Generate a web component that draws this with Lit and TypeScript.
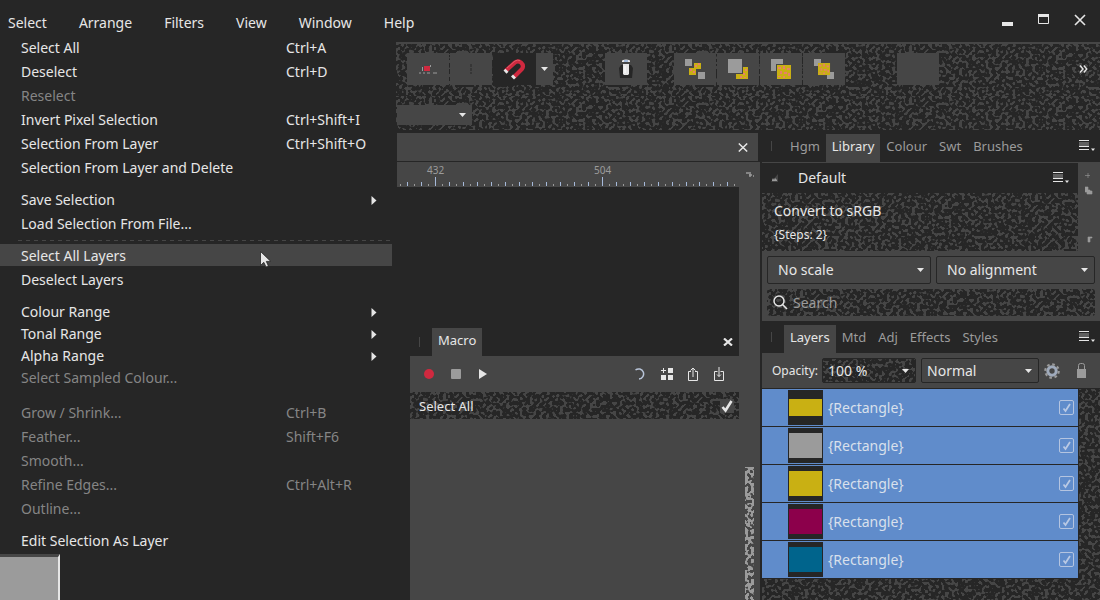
import { LitElement, html, css, svg, unsafeCSS, nothing } from "lit";
import { customElement } from "lit/decorators.js";
import { classMap } from "lit/directives/class-map.js";

// Two-tone speckle tile, used for the textured toolbar and list surfaces.
const speckle = (color: string, threshold: string, freq: string) =>
  unsafeCSS(
    `url("data:image/svg+xml,${encodeURIComponent(
      `<svg xmlns="http://www.w3.org/2000/svg" width="240" height="240"><filter id="n" x="0" y="0" width="100%" height="100%" color-interpolation-filters="sRGB"><feTurbulence type="fractalNoise" baseFrequency="${freq}" numOctaves="1" seed="7" stitchTiles="stitch"/><feColorMatrix values="0 0 0 0 0 0 0 0 0 0 0 0 0 0 0 24 0 0 0 ${threshold}" result="m"/><feFlood flood-color="${color}"/><feComposite operator="in" in2="m"/></filter><rect width="240" height="240" filter="url(#n)"/></svg>`
    )}")`
  );

const vector = (w: number, h: number, body: string) =>
  unsafeCSS(
    `url("data:image/svg+xml,${encodeURIComponent(
      `<svg xmlns="http://www.w3.org/2000/svg" width="${w}" height="${h}" viewBox="0 0 ${w} ${h}">${body}</svg>`
    )}")`
  );

const theme = css`
  :host {
    --dark: #262626;
    --panel: #464646;
    --dim: #9b9b9b;
    --text: #e6e6e6;
    --speckle: ${speckle("#464646", "-12.7", "0.3")};
    --speckle-dim: ${speckle("#9b9b9b", "-11", "0.3")};
    --arrow: ${vector(7, 4, '<path d="M0 0h7L3.500 4z" fill="#e6e6e6"/>')};
    font-family: "Noto Sans", "Open Sans", sans-serif;
    font-size: 14px;
    line-height: 20px;
    color: var(--text);
  }
  * {
    box-sizing: border-box;
  }
  button,
  input,
  select {
    font: inherit;
    color: inherit;
    margin: 0;
    padding: 0;
    border: 0;
    border-radius: 0;
    background: none;
    appearance: none;
  }
  svg {
    display: block;
  }
  .speckled {
    background-color: var(--dark);
    background-image: var(--speckle);
  }
  .tabs {
    display: flex;
    align-items: flex-end;
    background: var(--dark);
    color: var(--dim);
    font-size: 13px;
  }
  .tabs .grip {
    width: 1px;
    height: 10px;
    background: var(--panel);
    align-self: center;
  }
  .tab {
    height: 28px;
    padding: 0 6px 4px;
  }
  .tab.on {
    background: var(--panel);
    color: var(--text);
  }
  .push {
    margin-left: auto;
  }
`;

const panelMenuIcon = svg`<svg width="16" height="12" viewBox="0 0 16 12"><path d="M0 .5h10M0 6.500h10M0 9.500h10" stroke="#e6e6e6"/><path d="M0 3h10M0 5h10" stroke="#9b9b9b"/><path d="M12 8.500h4L14 11z" fill="#e6e6e6"/></svg>`;

type Item = { label: string; key?: string; off?: boolean; sub?: boolean; on?: boolean };

const groups: Item[][] = [
  [
    { label: "Select All", key: "Ctrl+A" },
    { label: "Deselect", key: "Ctrl+D" },
    { label: "Reselect", off: true },
    { label: "Invert Pixel Selection", key: "Ctrl+Shift+I" },
    { label: "Selection From Layer", key: "Ctrl+Shift+O" },
    { label: "Selection From Layer and Delete" },
  ],
  [{ label: "Save Selection", sub: true }, { label: "Load Selection From File..." }],
  [{ label: "Select All Layers", on: true }, { label: "Deselect Layers" }],
  [
    { label: "Colour Range", sub: true },
    { label: "Tonal Range", sub: true },
    { label: "Alpha Range", sub: true },
    { label: "Select Sampled Colour...", off: true },
  ],
  [
    { label: "Grow / Shrink...", key: "Ctrl+B", off: true },
    { label: "Feather...", key: "Shift+F6", off: true },
    { label: "Smooth...", off: true },
    { label: "Refine Edges...", key: "Ctrl+Alt+R", off: true },
    { label: "Outline...", off: true },
  ],
  [{ label: "Edit Selection As Layer" }],
];

@customElement("select-menu")
class SelectMenu extends LitElement {
  static styles = [
    theme,
    css`
      :host {
        display: flex;
        flex-direction: column;
        background: var(--dark);
      }
      .groups {
        display: flex;
        flex-direction: column;
        gap: 10px;
      }
      .group {
        display: flex;
        flex-direction: column;
        gap: 2px;
        position: relative;
      }
      .group.tight {
        gap: 0;
        padding-bottom: 3px;
      }
      .group.ruled::before {
        content: "";
        position: absolute;
        left: 18px;
        right: 4px;
        top: -4px;
        height: 1px;
        background: repeating-linear-gradient(90deg, var(--panel) 0 4px, transparent 4px 8px);
      }
      .item {
        display: grid;
        grid-template-columns: 265px 1fr auto;
        align-items: center;
        height: 22px;
        margin-right: 4px;
        padding: 2px 15px 0 21px;
        text-align: left;
      }
      .item.on {
        background: var(--panel);
      }
      .item:disabled {
        color: #858585;
      }
      .sub {
        grid-column: 3;
      }
      .cursor {
        position: absolute;
        left: 260px;
        top: 7px;
      }
      .page {
        width: 60px;
        flex: 1;
        min-height: 44px;
        margin-top: 3px;
        background: var(--dim);
        border-top: 3px solid var(--panel);
        border-right: 2px solid var(--text);
      }
    `,
  ];
  render() {
    return html`
      <div class="groups">
        ${groups.map(
          (g, i) => html`<div class=${classMap({ group: true, ruled: i === 2, tight: i === 3 })}>
            ${g.map(
              (m) => html`<button class=${classMap({ item: true, on: !!m.on })} ?disabled=${!!m.off}>
                <span>${m.label}</span>
                ${m.key ? html`<span>${m.key}</span>` : nothing}
                ${m.sub
                  ? html`<svg class="sub" width="6" height="9" viewBox="0 0 6 9"><path d="M.5 0L5.500 4.500L.5 9z" fill="#e6e6e6" /></svg>`
                  : nothing}
              </button>`
            )}
            ${i === 2
              ? html`<svg class="cursor" width="12" height="17" viewBox="0 0 12 17">
                  <path d="M.5.5v14l3.300-3.200 2.200 4.700 2.400-1.100-2.100-4.500h4.500z" fill="#e6e6e6" stroke="#262626" stroke-width=".8" />
                </svg>`
              : nothing}
          </div>`
        )}
      </div>
      <div class="page"></div>
    `;
  }
}

const pinkDots = svg`<path d="M1 2h3v2H1zM6 1h2v3H6zM10 3h3v2h-3zM3 6h2v3H3zM7 7h3v2H7zM11 8h2v3h-2zM1 11h3v1H1zM6 11h2v2H6z" fill="#e88068"/>`;

@customElement("tool-bars")
class ToolBars extends LitElement {
  static styles = [
    theme,
    css`
      :host {
        display: block;
        margin-top: 6px;
        border-top: 2px solid var(--panel);
      }
      .tools {
        display: flex;
        height: 52px;
        padding: 9px 12px 11px 11px;
        gap: 1px;
      }
      .tool {
        width: 42px;
        height: 32px;
        display: grid;
        place-items: center;
        background: var(--panel);
      }
      .tool.on {
        width: 43px;
        background: var(--dark);
      }
      .tool.more {
        width: 17px;
      }
      .snap {
        display: flex;
      }
      .trash {
        margin-left: 51px;
      }
      .order {
        display: flex;
        gap: 1px;
        margin-left: 26px;
      }
      .blank {
        margin-left: 51px;
      }
      .overflow {
        margin-left: auto;
        align-self: center;
      }
      .context {
        height: 34px;
        padding: 9px 1px 5px;
        display: flex;
      }
      .pick {
        width: 75px;
        height: 20px;
        background: var(--panel) var(--arrow) no-repeat right 6px center;
      }
    `,
  ];
  render() {
    return html`
      <div class="tools speckled">
        <button class="tool" aria-label="Snapping options">
          <svg width="18" height="14" viewBox="0 0 18 14">
            <path d="M0 11h2M4 11h2M8 11h3M14 11h4" stroke="#9b9b9b" />
            <path d="M3.500 5v4M11.500 3v2" stroke="#9b9b9b" />
            <path d="M5 4h6v5H5z" fill="#d0293f" />
          </svg>
        </button>
        <button class="tool" aria-label="Guides">
          <svg width="2" height="10" viewBox="0 0 2 10"><path d="M1 0v10" stroke="#262626" stroke-dasharray="3 1" /></svg>
        </button>
        <div class="snap">
          <button class="tool on" aria-label="Snapping">
            <svg width="24" height="22" viewBox="0 0 24 22">
              <path d="M2.500 13L12 4.400A4.900 4.900 0 0 1 19 11L11 19" fill="none" stroke="#d0293f" stroke-width="4.200" />
              <path d="M4 10L12 3A6 6 0 0 1 17 2.500" fill="none" stroke="#e05a68" stroke-width="1" />
              <path d="M.5 12.500l2-1.800 3 3-2 2zM8 18.500l2-2 3 3-2 2z" fill="#e6e6e6" />
            </svg>
          </button>
          <button class="tool more" aria-label="More snapping">
            <svg width="7" height="4" viewBox="0 0 7 4"><path d="M0 0h7L3.500 4z" fill="#e6e6e6" /></svg>
          </button>
        </div>
        <button class="tool trash" aria-label="Assistant">
          <svg width="14" height="20" viewBox="0 0 14 20">
            <path d="M2 6l-2 3 1 10h12l1-10-2-3z" fill="#262626" />
            <path d="M4 5h6v10l-1 1H5l-1-1z" fill="#e6e6e6" />
            <path d="M3 1.500q4-2 8 0v1.500H3z" fill="#e6e6e6" />
            <path d="M5 2h4" stroke="#608ccb" />
            <path d="M6 7v7" stroke="#fff" />
          </svg>
        </button>
        <div class="order">
          <button class="tool" aria-label="Move to back">
            <svg width="20" height="20" viewBox="0 0 20 20">
              <path d="M9 4h7v6h-5v6H4V9h5z" fill="#c9b013" />
              <path d="M10 6h2v2h-2zM13 4h2v2h-2zM5 10h2v2H5zM8 12h2v2H8z" fill="#e88068" />
              <path d="M0 0h7v7H0zM13 13h7v7h-7z" fill="#9b9b9b" />
            </svg>
          </button>
          <button class="tool" aria-label="Back one">
            <svg width="20" height="20" viewBox="0 0 20 20">
              <path d="M15 8h5v12H8v-5h7z" fill="#c9b013" />
              <path d="M17 10h2v2h-2zM15 14h2v2h-2zM12 17h2v2h-2zM16 18h2v1h-2z" fill="#e88068" />
              <path d="M0 0h14v14H0z" fill="#9b9b9b" />
            </svg>
          </button>
          <button class="tool" aria-label="Forward one">
            <svg width="20" height="20" viewBox="0 0 20 20">
              <path d="M0 0h12v5H5v7H0z" fill="#9b9b9b" />
              <g transform="translate(6 6)"><path d="M0 0h14v14H0z" fill="#c9b013" />${pinkDots}</g>
            </svg>
          </button>
          <button class="tool" aria-label="Move to front">
            <svg width="20" height="20" viewBox="0 0 20 20">
              <path d="M0 0h7v7H0zM13 13h7v7h-7z" fill="#9b9b9b" />
              <g transform="translate(4 4) scale(.86)"><path d="M0 0h14v14H0z" fill="#c9b013" />${pinkDots}</g>
            </svg>
          </button>
        </div>
        <button class="tool blank" aria-label="Insert target"></button>
        <button class="overflow" aria-label="More tools">
          <svg width="9" height="8" viewBox="0 0 9 8"><path d="M1 .5L4 4L1 7.500M4.800.5L7.800 4L4.800 7.500" fill="none" stroke="#e6e6e6" stroke-width="1.400" /></svg>
        </button>
      </div>
      <div class="context speckled">
        <select class="pick" aria-label="Preset"><option></option></select>
      </div>
    `;
  }
}

@customElement("macro-panel")
class MacroPanel extends LitElement {
  static styles = [
    theme,
    css`
      :host {
        display: flex;
        flex-direction: column;
        background: var(--panel);
      }
      .tabs {
        height: 28px;
        padding: 0 6px 0 9px;
        gap: 12px;
      }
      .close {
        align-self: center;
      }
      .bar {
        display: flex;
        align-items: center;
        height: 36px;
        padding: 0 14px;
        gap: 17px;
      }
      .bar .push {
        display: flex;
        align-items: center;
        gap: 15px;
      }
      .step {
        display: flex;
        align-items: center;
        justify-content: space-between;
        height: 27px;
        padding: 0 5px 0 9px;
        font-size: 13px;
      }
      .check {
        width: 14px;
        height: 14px;
        background: var(--panel)
          ${vector(14, 14, '<path d="M2.500 8L5.500 11.500L11.500 2" fill="none" stroke="#e6e6e6" stroke-width="2.600"/>')} no-repeat center;
      }
    `,
  ];
  render() {
    return html`
      <div class="tabs">
        <span class="grip"></span>
        <button class="tab on">Macro</button>
        <button class="close push" aria-label="Close">
          <svg width="10" height="8" viewBox="0 0 10 8"><path d="M1 .5L9 7.500M9 .5L1 7.500" stroke="#e6e6e6" stroke-width="2.200" /></svg>
        </button>
      </div>
      <div class="bar">
        <button aria-label="Record"><svg width="10" height="10"><circle cx="5" cy="5" r="5" fill="#d0293f" /></svg></button>
        <button aria-label="Stop"><svg width="10" height="10"><rect width="10" height="10" rx="1" fill="#9b9b9b" /></svg></button>
        <button aria-label="Play"><svg width="10" height="10"><path d="M1 0L9 5L1 10z" fill="#e6e6e6" /></svg></button>
        <div class="push">
          <button aria-label="Reset">
            <svg width="12" height="12" viewBox="0 0 12 12"><path d="M1.500 2A5 5 0 1 1 5 10.900" fill="none" stroke="#b8c4d8" stroke-width="1.500" /></svg>
          </button>
          <button aria-label="Add to library">
            <svg width="12" height="12" viewBox="0 0 12 12"><path d="M7 0h5v5H7zM0 7h5v5H0zM7 7h5v5H7z" fill="#e6e6e6" /><path d="M0 2.500h5M2.500 0v5" stroke="#e6e6e6" /></svg>
          </button>
          <button aria-label="Export">
            <svg width="11" height="14" viewBox="0 0 11 14"><path d="M3 4.500H.5v9h9v-9H7M5 1v9M2.500 3.500L5 1L7.500 3.500" fill="none" stroke="#e6e6e6" /></svg>
          </button>
          <button aria-label="Import">
            <svg width="11" height="14" viewBox="0 0 11 14"><path d="M3.500 4.500H.5v9h9v-9H6.500M5 0v9.500M3 7.500L5 9.500L7 7.500" fill="none" stroke="#e6e6e6" /></svg>
          </button>
        </div>
      </div>
      <label class="step speckled"><span>Select All</span><input class="check" type="checkbox" checked /></label>
    `;
  }
}

@customElement("document-view")
class DocumentView extends LitElement {
  static styles = [
    theme,
    css`
      :host {
        display: flex;
        flex-direction: column;
      }
      .title {
        display: flex;
        align-items: center;
        justify-content: flex-end;
        height: 28px;
        margin: 3px 2px 1px 1px;
        padding-right: 10px;
        background: var(--panel);
      }
      .view {
        flex: 1;
        display: grid;
        grid-template-columns: 1fr 21px;
        margin-left: 1px;
      }
      .column {
        display: flex;
        flex-direction: column;
      }
      .ruler {
        height: 25px;
        width: 100%;
        background: var(--panel);
      }
      .ruler text {
        font: 10px "Noto Sans", sans-serif;
        fill: var(--dim);
      }
      .canvas {
        flex: 1;
        padding: 141px 0 0 13px;
        background: var(--dark);
        display: flex;
      }
      macro-panel {
        flex: 1;
      }
      .scroll {
        background: var(--panel);
        display: flex;
        flex-direction: column;
        justify-content: space-between;
        padding-top: 10px;
      }
      .scroll svg {
        align-self: center;
      }
      .thumb {
        width: 9px;
        height: 133px;
        margin-left: 6px;
        background: var(--panel) var(--speckle-dim);
      }
    `,
  ];
  render() {
    const ticks = [];
    for (let i = -5; i < 44; i++) {
      const x = 38.5 + Math.round(i * 6.96);
      const top = i % 24 === 0 ? 15 : i % 2 === 0 ? 20 : 22;
      ticks.push(svg`<path d=${`M${x} ${top}V24`} stroke=${i % 2 ? "#9b9b9b" : "#a5b9da"} />`);
    }
    return html`
      <div class="title">
        <button aria-label="Close document">
          <svg width="10" height="9" viewBox="0 0 10 9"><path d="M.8.5L9.200 8.500M9.200.5L.8 8.500" stroke="#e6e6e6" stroke-width="1.500" /></svg>
        </button>
      </div>
      <div class="view">
        <div class="column">
          <svg class="ruler">
            ${ticks}
            <text x="30" y="12">432</text>
            <text x="197" y="12">504</text>
          </svg>
          <div class="canvas"><macro-panel></macro-panel></div>
        </div>
        <div class="scroll">
          <svg width="8" height="5" viewBox="0 0 8 5"><path d="M0 1h3M4 0v5M3 3h3M7 4h1" stroke="#9b9b9b" stroke-width="1.500" /></svg>
          <div class="thumb"></div>
        </div>
      </div>
    `;
  }
}

const layers = [
  { color: "#c9b013", wide: true },
  { color: "#9b9b9b" },
  { color: "#c9b013" },
  { color: "#8c004b" },
  { color: "#00648c" },
];

@customElement("side-panels")
class SidePanels extends LitElement {
  static styles = [
    theme,
    css`
      :host {
        display: flex;
        flex-direction: column;
        background: var(--panel);
        border-left: 2px solid var(--dark);
      }
      .tabs {
        height: 32px;
        padding: 0 5px 0 9px;
        gap: 0;
      }
      .tabs .grip {
        margin-right: 12px;
      }
      .tabs .push {
        align-self: center;
      }
      .library {
        display: grid;
        grid-template-columns: 1fr 22px;
        margin-top: 1px;
      }
      .head {
        display: flex;
        align-items: center;
        height: 30px;
        padding: 0 9px;
        background: var(--dark);
      }
      .head .name {
        margin-left: 20px;
      }
      .entry {
        height: 58px;
        padding: 8px 12px;
        display: flex;
        flex-direction: column;
        gap: 4px;
      }
      .entry small {
        font-size: 12px;
      }
      .marks {
        justify-self: center;
        margin-top: 10px;
      }
      .filters {
        display: grid;
        grid-template-columns: 164fr 159fr;
        gap: 5px;
        padding: 5px;
      }
      .drop {
        width: 100%;
        height: 28px;
        padding: 0 20px 0 10px;
        border: 1px solid var(--dark);
        border-radius: 2px;
        background: var(--arrow) no-repeat right 6px center;
      }
      .search {
        grid-column: 1 / -1;
        display: flex;
        align-items: center;
        gap: 5px;
        height: 27px;
        padding-left: 6px;
        border-radius: 3px;
      }
      .search input {
        flex: 1;
        min-width: 0;
      }
      .search input::placeholder {
        color: var(--dim);
        opacity: 1;
      }
      .blend {
        display: flex;
        align-items: center;
        height: 35px;
        padding: 0 14px 0 10px;
        font-size: 12px;
      }
      .blend .drop {
        height: 25px;
        padding-left: 5px;
        width: 118px;
        font-size: 14px;
      }
      .blend .opacity {
        width: 94px;
        margin: 0 5px 0 4px;
        background-color: var(--dark);
        background-image: var(--arrow), var(--speckle);
        background-repeat: no-repeat, repeat;
      }
      .blend .gear {
        margin: 0 auto 0 5px;
      }
      .stack {
        flex: 1;
        padding: 0 22px 0 0;
        border-top: 1px solid var(--dark);
      }
      .row {
        display: flex;
        align-items: center;
        height: 37px;
        margin-bottom: 1px;
        padding: 0 4px 0 26px;
        background: #608ccb;
        outline: 1px solid var(--dark);
      }
      .row span {
        margin-left: 5px;
        color: #d9e0ec;
      }
      .thumb {
        width: 35px;
        height: 35px;
        background: var(--dark);
        display: grid;
        place-items: center;
      }
      .thumb div {
        width: 33px;
        height: 25px;
      }
      .thumb div.wide {
        height: 17px;
      }
      .tick {
        width: 15px;
        height: 15px;
        margin-left: auto;
        border: 1px solid #b4c4e0;
        border-radius: 2px;
        background: ${vector(13, 13, '<path d="M3.500 7.500L5.500 10L10 3" fill="none" stroke="#b9c9e4" stroke-width="1.800"/>')} no-repeat center;
      }
    `,
  ];
  render() {
    const tabs = (names: string[], on: string) => html`<div class="tabs">
      <span class="grip"></span>
      ${names.map((n) => html`<button class=${classMap({ tab: true, on: n === on })}>${n}</button>`)}
      <button class="push" aria-label="Panel menu">${panelMenuIcon}</button>
    </div>`;
    return html`
      ${tabs(["Hgm", "Library", "Colour", "Swt", "Brushes"], "Library")}
      <div class="library">
        <div>
          <div class="head">
            <svg width="7" height="8" viewBox="0 0 7 8"><path d="M7 0v8H0z" fill="#464646" /><path d="M1 6l1-2 1 2 1-2 2 2v1H1z" fill="#9b9b9b" /></svg>
            <span class="name">Default</span>
            <button class="push" aria-label="Category menu">${panelMenuIcon}</button>
          </div>
          <div class="entry speckled"><span>Convert to sRGB</span><small>{Steps: 2}</small></div>
        </div>
        <svg class="marks" width="8" height="70" viewBox="0 0 8 70">
          <path d="M3 0v5M0 2.500h5M0 14h3v3h2v4H2v-2H0zM4 18h3v3H5zM3 64h4v1H5v4H3z" fill="#9b9b9b" stroke="#9b9b9b" stroke-width=".6" />
        </svg>
      </div>
      <div class="filters">
        <select class="drop" aria-label="Scale"><option>No scale</option></select>
        <select class="drop" aria-label="Alignment"><option>No alignment</option></select>
        <label class="search speckled">
          <svg width="15" height="15" viewBox="0 0 15 15"><circle cx="6" cy="6" r="5" fill="none" stroke="#e6e6e6" stroke-width="1.500" /><path d="M9.500 9.500L14 14" stroke="#e6e6e6" stroke-width="1.600" /></svg>
          <input type="text" placeholder="Search" aria-label="Search" />
        </label>
      </div>
      ${tabs(["Layers", "Mtd", "Adj", "Effects", "Styles"], "Layers")}
      <div class="blend">
        <label for="opacity">Opacity:</label>
        <select id="opacity" class="drop opacity"><option>100 %</option></select>
        <select class="drop" aria-label="Blend mode"><option>Normal</option></select>
        <button class="gear" aria-label="Blend ranges">
          <svg width="16" height="16" viewBox="0 0 16 16">
            <circle cx="8" cy="8" r="4.200" fill="none" stroke="#9faabb" stroke-width="3" />
            <circle cx="8" cy="8" r="6.700" fill="none" stroke="#9b9b9b" stroke-width="2.200" stroke-dasharray="2.630 2.630" />
          </svg>
        </button>
        <button aria-label="Lock">
          <svg width="9" height="15" viewBox="0 0 9 15"><path d="M1.500 7V2.500q0-2 2-2h2q2 0 2 2V7" fill="none" stroke="#9b9b9b" /><path d="M0 6h9v9H0z" fill="#9b9b9b" /></svg>
        </button>
      </div>
      <div class="stack speckled">
        ${layers.map(
          (l) => html`<label class="row">
            <div class="thumb"><div class=${classMap({ wide: !!l.wide })} style=${`background:${l.color}`}></div></div>
            <span>{Rectangle}</span>
            <input class="tick" type="checkbox" checked />
          </label>`
        )}
      </div>
    `;
  }
}

@customElement("app-root")
class AppRoot extends LitElement {
  static styles = [
    theme,
    css`
      :host {
        display: flex;
        flex-direction: column;
        min-height: 100vh;
        background: var(--dark);
      }
      header {
        display: flex;
        align-items: center;
        height: 36px;
        padding: 8px 14px 0 8px;
      }
      nav {
        display: flex;
        gap: 32px;
        padding-top: 2px;
      }
      .window {
        display: flex;
        align-items: center;
        gap: 25px;
        margin-left: auto;
      }
      .body {
        flex: 1;
        display: grid;
        grid-template-columns: 396px 1fr;
      }
      .main {
        display: flex;
        flex-direction: column;
      }
      .work {
        flex: 1;
        display: grid;
        grid-template-columns: 1fr 340px;
      }
    `,
  ];
  render() {
    return html`
      <header>
        <nav>
          ${["Select", "Arrange", "Filters", "View", "Window", "Help"].map((n) => html`<button>${n}</button>`)}
        </nav>
        <div class="window">
          <button aria-label="Minimise"><svg width="11" height="12"><path d="M0 6h11v4H0z" fill="#e6e6e6" /></svg></button>
          <button aria-label="Maximise">
            <svg width="11" height="18" viewBox="0 0 11 18"><path d="M.5 1.500h10v9H.5z" fill="none" stroke="#e6e6e6" /><path d="M0 1h11v3H0z" fill="#e6e6e6" /></svg>
          </button>
          <button aria-label="Close">
            <svg width="12" height="17" viewBox="0 0 12 17"><path d="M1 1L11 11M11 1L1 11" stroke="#e6e6e6" stroke-width="1.600" /></svg>
          </button>
        </div>
      </header>
      <div class="body">
        <select-menu></select-menu>
        <div class="main">
          <tool-bars></tool-bars>
          <div class="work">
            <document-view></document-view>
            <side-panels></side-panels>
          </div>
        </div>
      </div>
    `;
  }
}
